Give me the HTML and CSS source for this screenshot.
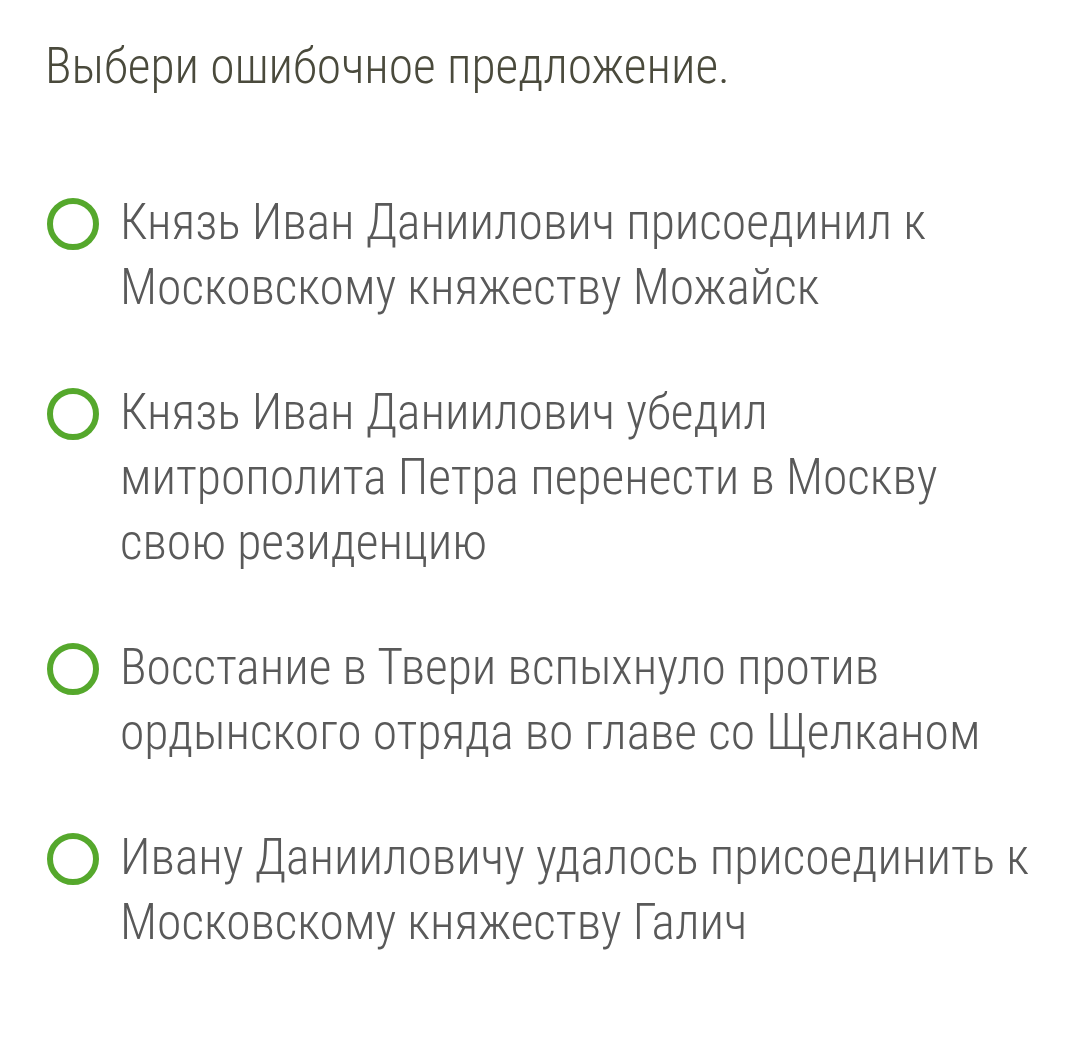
FILE: index.html
```html
<!DOCTYPE html>
<html lang="ru">
<head>
<meta charset="utf-8">
<link rel="stylesheet" href="styles.css">
</head>
<body>
<div class="page">
  <h1 class="title">Выбери ошибочное предложение.</h1>
  <div class="options">
    <div class="option"><span class="radio"></span><span class="label">Князь Иван Даниилович присоединил к Московскому княжеству Можайск</span></div>
    <div class="option"><span class="radio"></span><span class="label">Князь Иван Даниилович убедил митрополита Петра перенести в Москву свою резиденцию</span></div>
    <div class="option"><span class="radio"></span><span class="label">Восстание в Твери вспыхнуло против ордынского отряда во главе со Щелканом</span></div>
    <div class="option"><span class="radio"></span><span class="label">Ивану Данииловичу удалось присоединить к Московскому княжеству Галич</span></div>
  </div>
</div>
</body>
</html>
```

FILE: styles.css
```css
html, body {
  margin: 0;
  padding: 0;
  background: #ffffff;
}
.page {
  padding: 36px 40px 0 45px;
  font-family: "Roboto", "Liberation Sans", sans-serif;
  font-stretch: 75%;
}
.title {
  margin: 0;
  font-size: 49.5px;
  line-height: 60px;
  font-weight: 350;
  color: #4a4a3c;
}
.options {
  margin-top: 94px;
  display: flex;
  flex-direction: column;
  gap: 60px;
}
.option {
  display: flex;
  align-items: flex-start;
}
.radio {
  flex: none;
  width: 40px;
  height: 40px;
  border: 6px solid #55a82c;
  border-radius: 50%;
  margin-top: 8px;
  margin-right: 21px;
  margin-left: 2px;
}
.label {
  font-size: 49.6px;
  line-height: 65px;
  font-weight: 280;
  color: #595959;
}
```
